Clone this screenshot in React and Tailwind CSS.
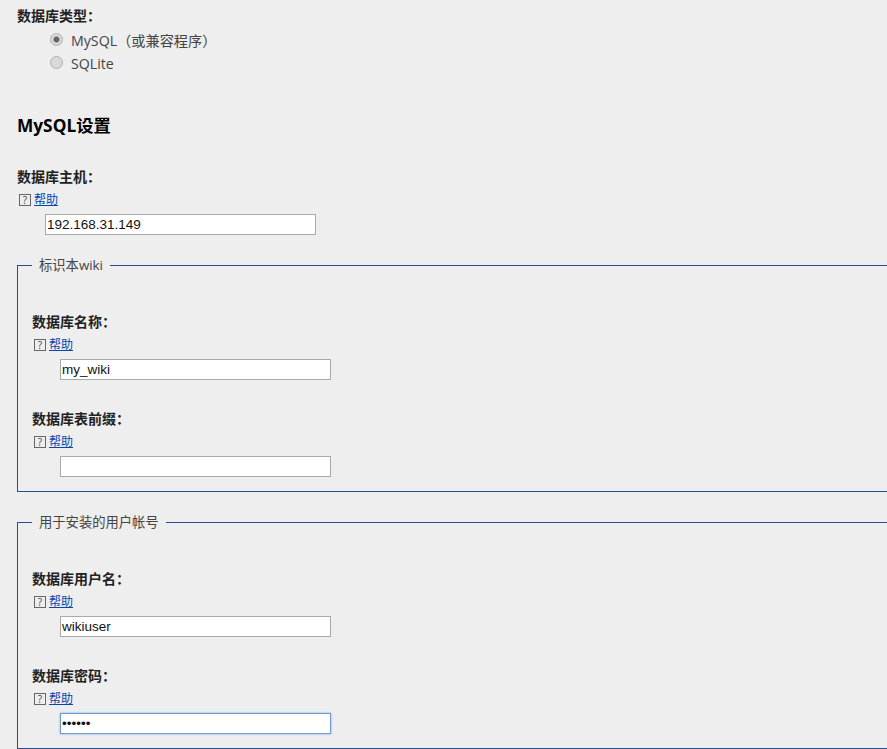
const FONT = "font-['Open_Sans','Noto_Sans_CJK_SC',sans-serif]";

const HelpLink = () => (
  <div className="mt-[3px] flex h-5 items-center">
    <span className="ml-[2px] flex h-[12px] w-[12px] items-center justify-center border border-[#666] text-[10px] leading-none text-[#444]">
      ?
    </span>
    <a href="#" className="ml-[3px] text-[12px] text-[#0645ad] underline">
      帮助
    </a>
  </div>
);

const Field = ({ label, value, type = "text", focused, className = "" }) => (
  <div className={className}>
    <label className="block h-5 text-[14px] leading-5 font-bold text-[#222]">{label}</label>
    <HelpLink />
    <input
      type={type}
      defaultValue={value}
      className={`mt-[4px] ml-[28px] block h-[21px] w-[271px] border bg-white px-[1px] font-['Liberation_Sans',sans-serif] text-[13.5px] text-[#111] outline-none ${
        focused ? "border-[#6f9bd8] shadow-[0_0_2px_#7da7e0]" : "border-[#a9a9a9]"
      }`}
    />
  </div>
);

const Group = ({ legend, children, className = "" }) => (
  <fieldset className={`w-[900px] border border-[#2a4b8d] pr-4 pb-[14px] pl-[14px] ${className}`}>
    <legend className="h-5 px-[7px] text-[13.3px] leading-5 text-[#444]">{legend}</legend>
    <div className="pt-[37px]">{children}</div>
  </fieldset>
);

const Radio = ({ label, checked }) => (
  <label className="flex h-[23px] items-center text-[14.2px] text-[#444]">
    <input
      type="radio"
      name="dbtype"
      disabled
      defaultChecked={checked}
      className="m-0 h-[13px] w-[13px] appearance-none rounded-full border border-[#b0b0b0] bg-[#d9d9d9] checked:bg-[radial-gradient(circle,#666_0,#666_2.5px,#d9d9d9_3.5px)]"
    />
    <span className="ml-[8px] pt-[2px]">{label}</span>
  </label>
);

export default function App() {
  return (
    <div className={`h-[749px] w-[887px] overflow-hidden bg-[#eeeeee] pt-[6px] pl-[17px] ${FONT}`}>
      <label className="block h-5 text-[14px] leading-5 font-bold text-[#222]">数据库类型：</label>
      <div className="mt-[2px] ml-[33px]">
        <Radio label="MySQL（或兼容程序）" checked />
        <Radio label="SQLite" />
      </div>

      <h2 className="mt-[40px] h-6 text-[17.3px] leading-6 font-bold text-black">MySQL设置</h2>

      <Field className="mt-[29px]" label="数据库主机：" value="192.168.31.149" />

      <Group className="mt-[20px]" legend="标识本wiki">
        <Field label="数据库名称：" value="my_wiki" />
        <Field className="mt-[29px]" label="数据库表前缀：" value="" />
      </Group>

      <Group className="mt-[20px]" legend="用于安装的用户帐号">
        <Field label="数据库用户名：" value="wikiuser" />
        <Field className="mt-[29px]" label="数据库密码：" value="123456" type="password" focused />
      </Group>
    </div>
  );
}
